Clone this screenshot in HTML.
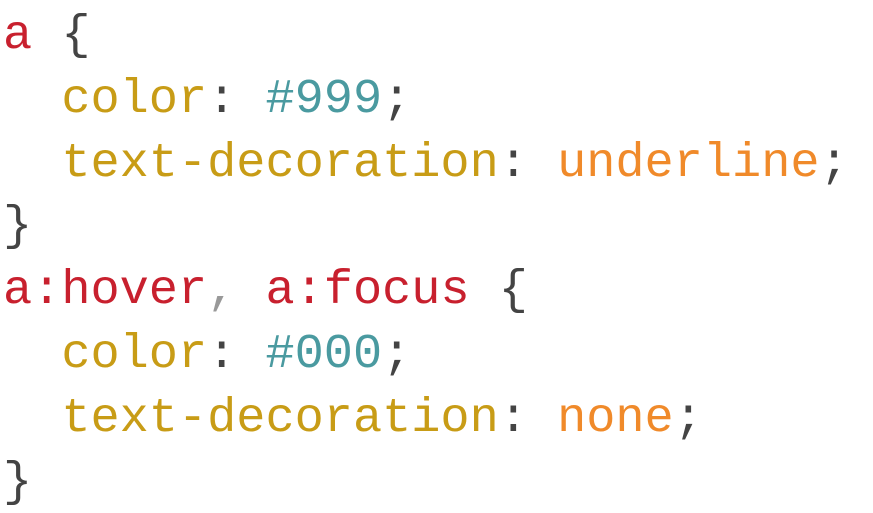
<!DOCTYPE html>
<html><head><style>
html,body{margin:0;padding:0;background:#fff;width:873px;height:513px;overflow:hidden}
pre{margin:0;padding:0 0 0 3px;font-family:"Liberation Mono",monospace;font-size:48.6px;line-height:63.8px;color:#444;position:relative;top:4px}
.r{color:#c8202e}.g{color:#c89c16}.t{color:#4a9aa0}.o{color:#f08a2a}.c{color:#999}
</style></head><body><pre><span class="r">a</span> {
  <span class="g">color</span>: <span class="t">#999</span>;
  <span class="g">text-decoration</span>: <span class="o">underline</span>;
}
<span class="r">a:hover</span><span class="c">,</span> <span class="r">a:focus</span> {
  <span class="g">color</span>: <span class="t">#000</span>;
  <span class="g">text-decoration</span>: <span class="o">none</span>;
}</pre></body></html>
